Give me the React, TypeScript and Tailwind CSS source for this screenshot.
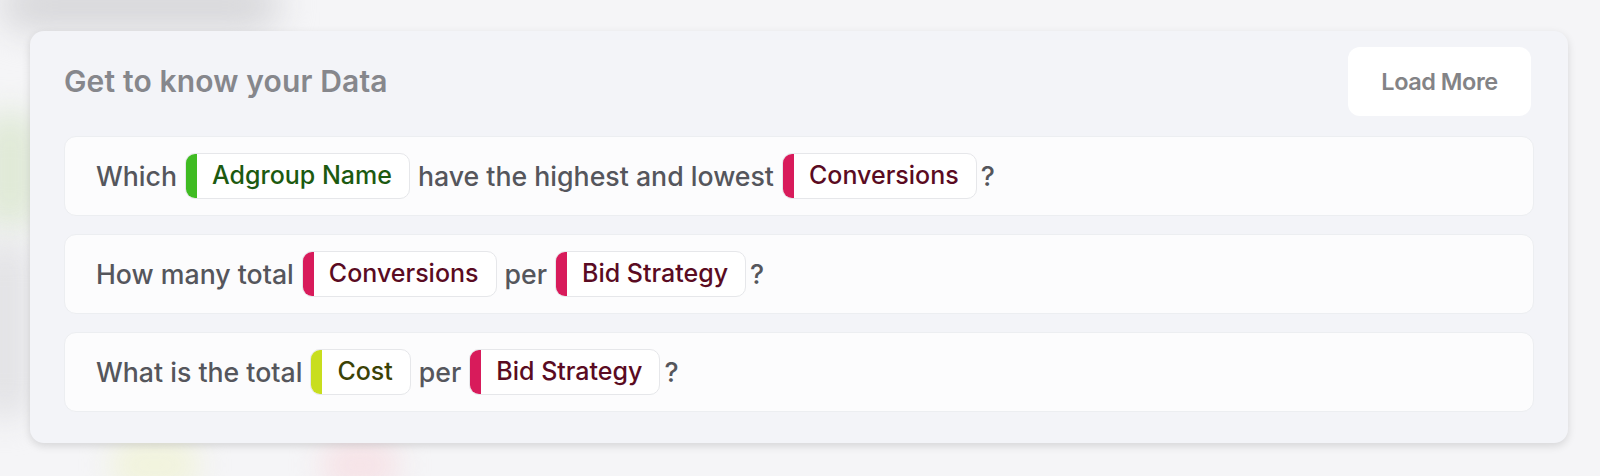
import { FC } from "react";

type Tone = "green" | "red" | "lime";

const toneStyles: Record<Tone, { bar: string; text: string }> = {
  green: { bar: "bg-[#3fbb22]", text: "text-[#1c5a10]" },
  red: { bar: "bg-[#d81b5b]", text: "text-[#5a0b22]" },
  lime: { bar: "bg-[#c8de1e]", text: "text-[#3b4205]" },
};

type Part = string | { chip: string; tone: Tone };

const questions: Part[][] = [
  [
    "Which",
    { chip: "Adgroup Name", tone: "green" },
    "have the highest and lowest",
    { chip: "Conversions", tone: "red" },
    "?",
  ],
  [
    "How many total",
    { chip: "Conversions", tone: "red" },
    "per",
    { chip: "Bid Strategy", tone: "red" },
    "?",
  ],
  [
    "What is the total",
    { chip: "Cost", tone: "lime" },
    "per",
    { chip: "Bid Strategy", tone: "red" },
    "?",
  ],
];

const Chip: FC<{ label: string; tone: Tone }> = ({ label, tone }) => {
  const style = toneStyles[tone];
  return (
    <span className="flex h-[46px] items-stretch overflow-hidden rounded-[10px] border border-[#e6e7ea] bg-white">
      <span className={`w-[11px] shrink-0 ${style.bar}`} />
      <span
        className={`flex items-center pl-[15px] pr-[17px] text-[25px] ${style.text}`}
      >
        {label}
      </span>
    </span>
  );
};

const QuestionRow: FC<{ parts: Part[] }> = ({ parts }) => (
  <div className="flex h-[80px] items-center gap-[8px] rounded-[12px] border border-[#eceef1] bg-[#fcfcfd] px-[31px] text-[26.7px] font-medium text-[#55565c]">
    {parts.map((part, i) =>
      typeof part === "string" ? (
        <span key={i} className={part === "?" ? "-ml-[4px]" : ""}>
          {part}
        </span>
      ) : (
        <Chip key={i} label={part.chip} tone={part.tone} />
      ),
    )}
  </div>
);

export default function App() {
  return (
    <div
      className="relative min-h-screen overflow-hidden bg-[#f5f5f7]"
      style={{ fontFamily: "Inter, 'Liberation Sans', sans-serif" }}
    >
      {/* blurred stuff behind the card */}
      <div className="absolute -top-[20px] left-0 h-[50px] w-[280px] rounded-full bg-[#d6d6d9] blur-[18px]" />
      <div className="absolute left-[-20px] top-[110px] h-[120px] w-[60px] rounded-full bg-[#dfe9d6] blur-[16px]" />
      <div className="absolute left-[-20px] top-[240px] h-[180px] w-[50px] rounded-full bg-[#e2e2e5] blur-[16px]" />
      <div className="absolute left-[110px] top-[440px] h-[50px] w-[90px] rounded-full bg-[#f1f3dc] blur-[14px]" />
      <div className="absolute left-[320px] top-[440px] h-[50px] w-[80px] rounded-full bg-[#f6e3e7] blur-[14px]" />

      <div className="relative pl-[30px] pt-[31px]">
        <div className="w-[1538px] rounded-[14px] bg-[#f3f4f8] px-[34px] pb-[31px] pt-4 shadow-[0_3px_8px_rgba(0,0,0,0.13)]">
          <div className="flex items-center justify-between">
            <h2 className="text-[30px] font-semibold tracking-[0.005em] text-[#86878c]">
              Get to know your Data
            </h2>
            <button className="mr-[3px] h-[69px] w-[183px] rounded-[12px] bg-white text-[23.5px] font-semibold tracking-[-0.02em] text-[#838386]">
              Load More
            </button>
          </div>

          <div className="mt-5 flex flex-col gap-[18px]">
            {questions.map((parts, i) => (
              <QuestionRow key={i} parts={parts} />
            ))}
          </div>
        </div>
      </div>
    </div>
  );
}
